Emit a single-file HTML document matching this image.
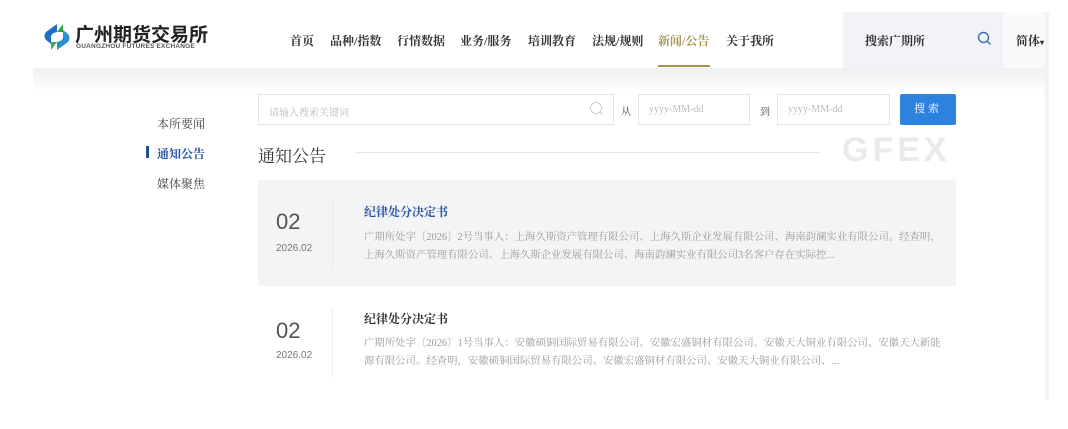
<!DOCTYPE html>
<html><head><meta charset="utf-8"><style>
*{margin:0;padding:0;box-sizing:border-box}
body{width:1068px;height:429px;background:#fff;position:relative;overflow:hidden;font-family:"Liberation Serif","Noto Serif CJK SC",serif;color:#333}
.a{position:absolute;white-space:nowrap}
.page{position:absolute;left:33px;top:12px;width:1013px;height:388px;background:#fff}
.band{position:absolute;left:33px;top:68px;width:1013px;height:24px;background:linear-gradient(#eef0f3,#fff)}
.strip{position:absolute;left:1045px;top:12px;width:4px;height:388px;background:#f1f2f4}
.nav{font-size:12px;top:32px;color:#333;font-weight:bold}
.sans{font-family:"Liberation Sans","Noto Sans CJK SC",sans-serif}
.inp{position:absolute;border:1px solid #e3e5e8;background:#fff;height:31px;top:94px;font-size:10px;color:#bbb;padding:9px 0 0 10px}
.desc{font-size:10.4px;color:#9a9a9a;line-height:18px}
</style></head><body>
<div class="page"></div>
<div class="band"></div>
<div class="strip"></div>
<div class="a" style="left:843px;top:12px;width:160px;height:56px;background:#f1f3f6"></div>
<div class="a" style="left:1003px;top:12px;width:42px;height:56px;background:#fafafa"></div>
<svg class="a" style="left:43px;top:22px" width="28" height="30" viewBox="0 0 28 30">
<path d="M14 2 L3 10 Q0 14 3 18 L8 22 L8 14 Q9 11 14 10 Z" fill="#1f6fc2"/>
<path d="M14 10 L20 10 L20 2 Z" fill="#3a9a4a"/>
<path d="M14 28 L25 20 Q28 16 25 12 L20 8 L20 16 Q19 19 14 20 Z" fill="#2b8fd4"/>
<path d="M14 20 L8 20 L8 28 Z" fill="#46a84a"/>
</svg>
<div class="a sans" style="left:75px;top:20px;font-size:19px;color:#222;font-weight:bold">广州期货交易所</div>
<div class="a sans" style="left:76px;top:43px;font-size:6.5px;color:#555;font-weight:bold;letter-spacing:0.2px">GUANGZHOU FUTURES EXCHANGE</div>
<div class="a nav" style="left:290px">首页</div>
<div class="a nav" style="left:330px">品种/指数</div>
<div class="a nav" style="left:397px">行情数据</div>
<div class="a nav" style="left:460px">业务/服务</div>
<div class="a nav" style="left:528px">培训教育</div>
<div class="a nav" style="left:592px">法规/规则</div>
<div class="a nav" style="left:658px;color:#a8974a">新闻/公告</div>
<div class="a" style="left:658px;top:65px;width:52px;height:2px;background:#a8974a"></div>
<div class="a nav" style="left:726px">关于我所</div>
<div class="a nav" style="left:865px">搜索广期所</div>
<svg class="a" style="left:977px;top:31px" width="15" height="15" viewBox="0 0 15 15"><circle cx="6.5" cy="6.5" r="5" fill="none" stroke="#3b6fb6" stroke-width="1.4"/><path d="M10 10 L13.5 13.5" stroke="#3b6fb6" stroke-width="1.4"/></svg>
<div class="a nav" style="left:1016px">简体<span style="font-size:8px">▾</span></div>

<div class="a" style="left:157px;top:115px;font-size:12px;color:#444">本所要闻</div>
<div class="a" style="left:146px;top:146px;width:3px;height:12px;background:#1f4f9e"></div>
<div class="a" style="left:157px;top:145px;font-size:12px;color:#1f4f9e;font-weight:bold">通知公告</div>
<div class="a" style="left:157px;top:175px;font-size:12px;color:#444">媒体聚焦</div>

<div class="inp" style="left:258px;width:356px">请输入搜索关键词</div>
<svg class="a" style="left:589px;top:101px" width="15" height="15" viewBox="0 0 15 15"><circle cx="7" cy="7" r="5.5" fill="none" stroke="#ccc" stroke-width="1"/><path d="M11 11 L13.5 13.5" stroke="#ccc"/></svg>
<div class="a" style="left:621px;top:103px;font-size:10px;color:#444">从</div>
<div class="inp" style="left:638px;width:112px">yyyy-MM-dd</div>
<div class="a" style="left:760px;top:103px;font-size:10px;color:#444">到</div>
<div class="inp" style="left:777px;width:113px">yyyy-MM-dd</div>
<div class="a" style="left:900px;top:94px;width:56px;height:31px;background:#2c82dc;border-radius:2px;color:#fff;font-size:11px;text-align:center;line-height:31px;letter-spacing:3px">搜索</div>

<div class="a" style="left:258px;top:142px;font-size:17px;color:#333">通知公告</div>
<div class="a" style="left:355px;top:152px;width:465px;height:1px;background:#e6e6e6"></div>
<div class="a sans" style="left:842px;top:131px;font-size:34px;color:#e9eaec;letter-spacing:4px;font-weight:bold">GFEX</div>

<div class="a" style="left:258px;top:180px;width:698px;height:106px;background:#f3f4f6"></div>
<div class="a" style="left:332px;top:198px;width:1px;height:70px;background:#e8e8e8"></div>
<div class="a sans" style="left:276px;top:209px;font-size:22px;color:#555">02</div>
<div class="a sans" style="left:276px;top:243px;font-size:10px;color:#777">2026.02</div>
<div class="a" style="left:364px;top:203px;font-size:12px;color:#2a55a0;font-weight:bold">纪律处分决定书</div>
<div class="a desc" style="left:364px;top:229px">广期所处字〔2026〕2号当事人：上海久斯资产管理有限公司、上海久斯企业发展有限公司、海南韵澜实业有限公司。经查明，<br>上海久斯资产管理有限公司、上海久斯企业发展有限公司、海南韵澜实业有限公司3名客户存在实际控...</div>

<div class="a" style="left:332px;top:308px;width:1px;height:70px;background:#eee"></div>
<div class="a sans" style="left:276px;top:318px;font-size:22px;color:#555">02</div>
<div class="a sans" style="left:276px;top:350px;font-size:10px;color:#777">2026.02</div>
<div class="a" style="left:364px;top:310px;font-size:12px;color:#333;font-weight:bold">纪律处分决定书</div>
<div class="a desc" style="left:364px;top:335px">广期所处字〔2026〕1号当事人：安徽硕铜国际贸易有限公司、安徽宏盛铜材有限公司、安徽天大铜业有限公司、安徽天大新能<br>源有限公司。经查明，安徽硕铜国际贸易有限公司、安徽宏盛铜材有限公司、安徽天大铜业有限公司、...</div>
</body></html>
